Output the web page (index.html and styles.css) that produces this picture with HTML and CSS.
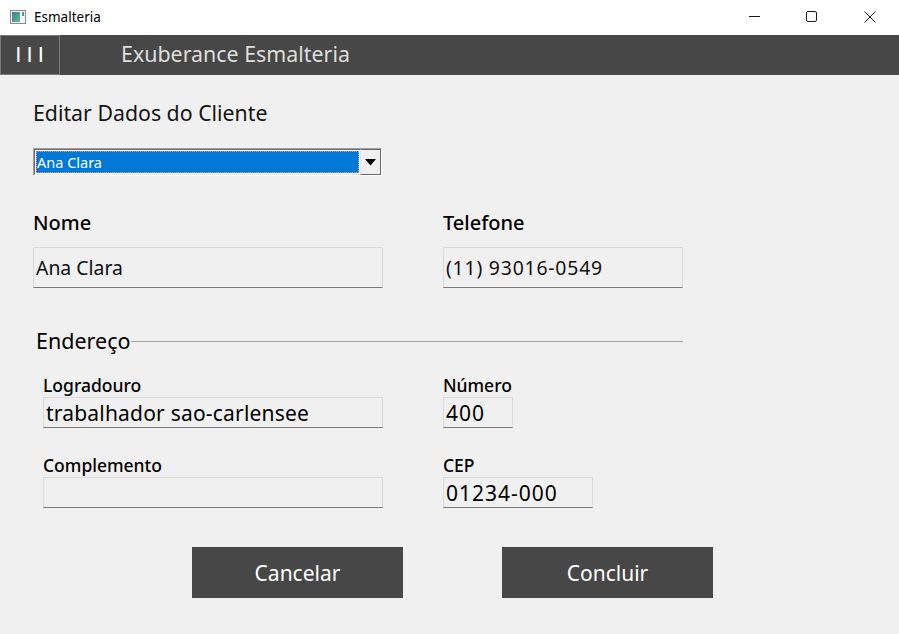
FILE: index.html
```html
<!DOCTYPE html>
<html lang="pt">
<head>
<meta charset="utf-8">
<title>Esmalteria</title>
<link rel="stylesheet" href="styles.css">
</head>
<body>
<div class="window">
  <div class="titlebar">
    <svg class="app-icon" width="16" height="14" viewBox="0 0 16 14">
      <defs>
        <linearGradient id="g" x1="0" y1="0" x2="1" y2="1">
          <stop offset="0" stop-color="#2f7d9a"/>
          <stop offset="1" stop-color="#6dbb8a"/>
        </linearGradient>
      </defs>
      <rect x="0.5" y="0.5" width="15" height="13" fill="#f4f4f4" stroke="#8a8a8a"/>
      <rect x="2" y="2" width="8" height="10" fill="url(#g)"/>
      <rect x="12" y="2" width="2" height="4" fill="#4a9a9a"/>
    </svg>
    <span class="win-title">Esmalteria</span>
    <div class="win-controls">
      <svg class="ctl" width="46" height="35" viewBox="0 0 46 35"><path d="M18 16.5h11" stroke="#1a1a1a" stroke-width="1"/></svg>
      <svg class="ctl" width="46" height="35" viewBox="0 0 46 35"><rect x="17.5" y="11.5" width="10" height="10" rx="1.5" fill="none" stroke="#1a1a1a" stroke-width="1"/></svg>
      <svg class="ctl" width="46" height="35" viewBox="0 0 46 35"><path d="M17.5 11.5l11 11M28.5 11.5l-11 11" stroke="#1a1a1a" stroke-width="1"/></svg>
    </div>
  </div>

  <div class="appbar">
    <div class="menu-btn">I I I</div>
    <div class="app-name">Exuberance Esmalteria</div>
  </div>

  <main class="content">
    <h1 class="page-title">Editar Dados do Cliente</h1>

    <div class="combo">
      <div class="combo-value"><span>Ana Clara</span></div>
      <div class="combo-arrow"><svg width="11" height="7" viewBox="0 0 11 7"><path d="M0 0h11L5.5 6.5z" fill="#000"/></svg></div>
    </div>

    <div class="grid-main">
      <div class="field">
        <label class="label-lg">Nome</label>
        <div class="input input-lg">Ana Clara</div>
      </div>
      <div class="field">
        <label class="label-lg">Telefone</label>
        <div class="input input-lg input-phone">(11) 93016-0549</div>
      </div>
    </div>

    <div class="group-head">
      <span class="group-title">Endereço</span>
      <span class="group-line"></span>
    </div>

    <div class="grid-addr">
      <div class="field">
        <label class="label-sm">Logradouro</label>
        <div class="input input-sm w-wide">trabalhador sao-carlensee</div>
      </div>
      <div class="field">
        <label class="label-sm">Número</label>
        <div class="input input-sm input-digits w-num">400</div>
      </div>
      <div class="field">
        <label class="label-sm">Complemento</label>
        <div class="input input-sm w-wide"></div>
      </div>
      <div class="field">
        <label class="label-sm">CEP</label>
        <div class="input input-sm input-digits w-cep">01234-000</div>
      </div>
    </div>

    <div class="actions">
      <button class="btn">Cancelar</button>
      <button class="btn">Concluir</button>
    </div>
  </main>
</div>
</body>
</html>
```

FILE: styles.css
```css
* { box-sizing: border-box; }

html, body {
  margin: 0;
  padding: 0;
}

body {
  width: 899px;
  height: 634px;
  overflow: hidden;
  background: #f0f0f0;
  font-family: "Noto Sans", "Open Sans", sans-serif;
  color: #000;
}

.window {
  width: 899px;
  height: 634px;
  display: flex;
  flex-direction: column;
}

.titlebar {
  height: 35px;
  background: #ffffff;
  display: flex;
  align-items: center;
  flex-shrink: 0;
}

.app-icon {
  margin-left: 10px;
  margin-top: -2px;
}

.win-title {
  margin-left: 8px;
  font-size: 13.5px;
  color: #000;
  margin-top: -2px;
}

.win-controls {
  margin-left: auto;
  display: flex;
  margin-right: 6px;
}

.ctl { display: block; margin-left: 12px; }

.appbar {
  height: 40px;
  background: #474747;
  display: flex;
  align-items: center;
  flex-shrink: 0;
}

.menu-btn {
  width: 60px;
  height: 40px;
  border: 1px solid #7b7b7b;
  color: #ffffff;
  font-family: "Liberation Sans", Arial, sans-serif;
  font-size: 22px;
  line-height: 38px;
  text-align: center;
  word-spacing: -1px;
  padding-right: 1px;
}

.app-name {
  margin-left: 61px;
  font-size: 21.4px;
  color: #dedede;
  line-height: 40px;
  margin-top: -2px;
}

.content {
  padding-left: 33px;
  display: flex;
  flex-direction: column;
}

.page-title {
  margin: 22px 0 0;
  height: 32px;
  line-height: 32px;
  font-size: 21.3px;
  font-weight: 400;
  color: #141414;
}

.combo {
  margin-top: 19px;
  width: 349px;
  height: 28px;
  border: 1px solid #a0a0a0;
  border-right-color: #ffffff;
  border-bottom-color: #ffffff;
  display: flex;
  background: #fff;
}

.combo-value {
  flex: 1;
  border: 1px solid #696969;
  border-right: none;
  border-bottom-color: #e3e3e3;
  background: #ffffff;
  padding: 1px;
  display: flex;
}

.combo-value span {
  flex: 1;
  background: #0078d7;
  color: #ffffff;
  font-size: 14.5px;
  line-height: 22px;
  padding-left: 1px;
  outline: 1px dotted #f39a3c;
  outline-offset: -1px;
}

.combo-arrow {
  width: 21px;
  background: #f0f0f0;
  border: 1px solid #e3e3e3;
  border-right-color: #696969;
  border-bottom-color: #696969;
  border-top-color: #696969;
  display: flex;
  align-items: center;
  justify-content: center;
}

.grid-main {
  margin-top: 32px;
  display: grid;
  grid-template-columns: 350px 240px;
  column-gap: 60px;
}

.field {
  display: flex;
  flex-direction: column;
}

.label-lg {
  height: 30px;
  line-height: 30px;
  font-size: 20px;
  font-weight: 500;
  color: #000;
  margin-bottom: 9px;
}

.input {
  background: #f0f0f0;
  border: 1px solid #dadada;
  border-bottom-color: #7a7a7a;
  color: #000;
  white-space: nowrap;
}

.input-lg {
  height: 41px;
  line-height: 39px;
  font-size: 19.4px;
  padding-left: 2px;
  color: #111;
}

.input-phone {
  letter-spacing: 0.8px;
}

.group-head {
  margin-top: 41px;
  width: 650px;
  height: 24px;
  display: flex;
  align-items: center;
  padding-left: 3px;
}

.group-title {
  font-size: 21.5px;
  line-height: 24px;
  color: #000;
}

.group-line {
  flex: 1;
  height: 1px;
  background: #a0a0a0;
}

.grid-addr {
  margin-top: 22px;
  margin-left: 10px;
  display: grid;
  grid-template-columns: 340px 200px;
  column-gap: 60px;
  row-gap: 27px;
}

.label-sm {
  height: 21px;
  line-height: 21px;
  font-size: 17.5px;
  font-weight: 500;
  margin-bottom: 1px;
}

.input-sm {
  height: 31px;
  line-height: 30px;
  font-size: 21px;
  padding-left: 2px;
  letter-spacing: 0.2px;
}

.input-digits {
  font-size: 21px;
  letter-spacing: 1px;
}

.w-wide { width: 340px; }
.w-num { width: 70px; }
.w-cep { width: 150px; }

.actions {
  margin-top: 39px;
  margin-left: 159px;
  display: flex;
  gap: 99px;
}

.btn {
  width: 211px;
  height: 51px;
  background: #474747;
  border: none;
  color: #ffffff;
  font-family: "Noto Sans", "Open Sans", sans-serif;
  font-size: 21px;
  padding: 0;
}
```
